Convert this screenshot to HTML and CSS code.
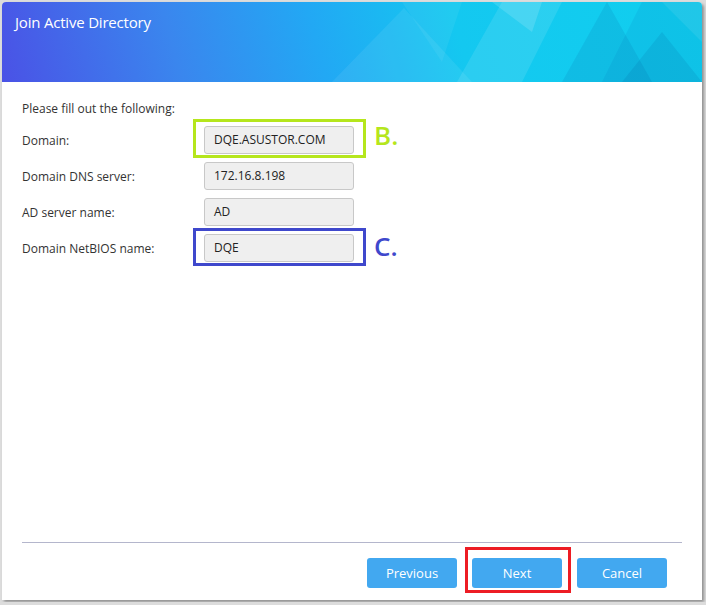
FILE: index.html
```html
<!DOCTYPE html>
<html lang="en">
<head>
  <meta charset="UTF-8" />
  <title>Join Active Directory</title>
  <link rel="stylesheet" href="styles.css">
</head>
<body>
  <div class="dialog">
    <div class="header">
      <svg class="pattern" viewBox="0 0 700 80" preserveAspectRatio="none">
        <polygon points="330,80 402,6 470,80" fill="rgba(255,255,255,0.07)" />
        <polygon points="400,0 460,0 440,60" fill="rgba(255,255,255,0.06)" />
        <polygon points="455,80 500,0 560,0 520,80" fill="rgba(255,255,255,0.10)" />
        <polygon points="490,0 540,0 530,30" fill="rgba(255,255,255,0.14)" />
        <polygon points="560,80 605,0 650,80" fill="rgba(0,60,140,0.10)" />
        <polygon points="600,80 640,0 700,0 700,80" fill="rgba(0,70,150,0.08)" />
        <polygon points="620,80 660,30 700,80" fill="rgba(0,60,130,0.10)" />
        <polygon points="660,0 700,0 700,40" fill="rgba(255,255,255,0.08)" />
      </svg>
      <div class="title">Join Active Directory</div>
    </div>

    <div class="content">
      <div class="intro">Please fill out the following:</div>
      <div class="form">
        <div class="row">
          <label>Domain:</label>
          <div class="field">
            <div class="input">DQE.ASUSTOR.COM</div>
            <span class="mark mark-b"></span>
            <span class="letter letter-b">B.</span>
          </div>
        </div>
        <div class="row">
          <label>Domain DNS server:</label>
          <div class="field">
            <div class="input">172.16.8.198</div>
          </div>
        </div>
        <div class="row">
          <label>AD server name:</label>
          <div class="field">
            <div class="input">AD</div>
          </div>
        </div>
        <div class="row">
          <label>Domain NetBIOS name:</label>
          <div class="field">
            <div class="input">DQE</div>
            <span class="mark mark-c"></span>
            <span class="letter letter-c">C.</span>
          </div>
        </div>
      </div>
    </div>

    <div class="footer">
      <div class="divider"></div>
      <div class="buttons">
        <button class="btn">Previous</button>
        <div class="next-wrap">
          <button class="btn">Next</button>
          <span class="mark mark-next"></span>
        </div>
        <button class="btn">Cancel</button>
      </div>
    </div>
  </div>
</body>
</html>
```

FILE: styles.css
```css
body {
  margin: 0;
  background: #dcdcdc;
  font-family: 'Open Sans', 'Noto Sans', sans-serif;
}

.dialog {
  margin: 2px;
  width: 700px;
  height: 598px;
  background: #ffffff;
  border-radius: 4px 4px 0 0;
  box-shadow: 2px 2px 3px rgba(0, 0, 0, 0.35);
  display: flex;
  flex-direction: column;
  overflow: hidden;
}

.header {
  position: relative;
  height: 80px;
  background: linear-gradient(75deg, #4a52e6 0%, #3a86ee 25%, #22a8f4 45%, #14c8f0 65%, #10cfee 100%);
}

.pattern {
  position: absolute;
  top: 0;
  left: 0;
  width: 100%;
  height: 100%;
}

.title {
  position: relative;
  padding: 10px 13px;
  color: #ffffff;
  font-size: 15px;
  letter-spacing: -0.2px;
}

.content {
  padding: 18px 20px 0 20px;
  color: #333333;
  font-size: 12px;
}

.intro {
  line-height: 18px;
}

.form {
  margin-top: 8px;
  display: flex;
  flex-direction: column;
  gap: 8px;
}

.row {
  display: flex;
  align-items: center;
  height: 28px;
}

.row label {
  width: 182px;
}

.field {
  position: relative;
}

.input {
  box-sizing: border-box;
  width: 150px;
  height: 28px;
  padding: 0 9px;
  line-height: 26px;
  background: #efefef;
  border: 1px solid #c8c8c8;
  border-radius: 3px;
  color: #222222;
}

.mark {
  position: absolute;
  box-sizing: border-box;
  border: 3px solid;
}

.mark-b {
  left: -11px;
  top: -7px;
  width: 173px;
  height: 39px;
  border-color: #b5e61d;
}

.mark-c {
  left: -11px;
  top: -6px;
  width: 173px;
  height: 38px;
  border-color: #3f48cc;
}

.letter {
  position: absolute;
  left: 170px;
  top: -8px;
  font-size: 26px;
  font-weight: 600;
  line-height: 34px;
}

.letter-b {
  color: #b5e61d;
}

.letter-c {
  color: #3f48cc;
  top: -5px;
}

.footer {
  margin-top: auto;
  padding-bottom: 12px;
}

.divider {
  margin: 0 20px;
  height: 1px;
  background: #b4b6cc;
}

.buttons {
  display: flex;
  justify-content: flex-end;
  gap: 15px;
  padding: 15px 35px 0 0;
}

.next-wrap {
  position: relative;
}

.btn {
  width: 90px;
  height: 30px;
  border: none;
  border-radius: 3px;
  background: #42a8f0;
  color: #ffffff;
  font-family: 'Open Sans', 'Noto Sans', sans-serif;
  font-size: 13px;
  padding: 0;
}

.mark-next {
  left: -7px;
  top: -11px;
  width: 106px;
  height: 46px;
  border-color: #ed1c24;
}
```
